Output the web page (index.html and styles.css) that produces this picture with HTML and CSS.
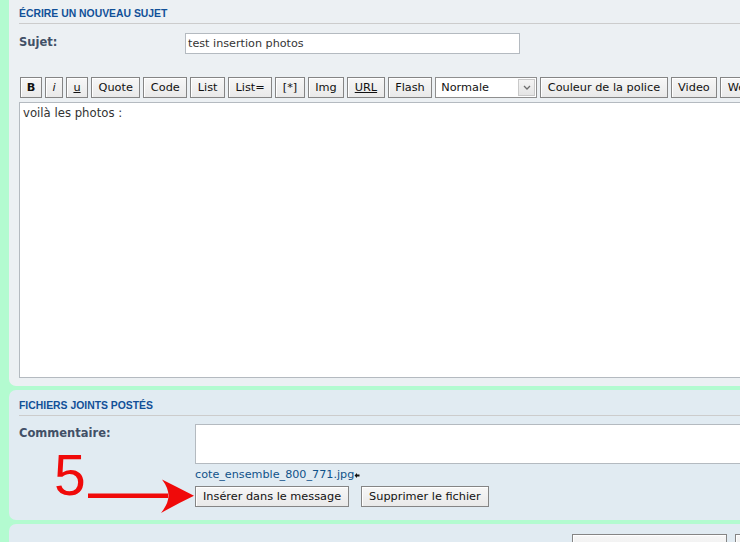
FILE: index.html
```html
<!DOCTYPE html>
<html lang="fr">
<head>
<meta charset="utf-8">
<title>Écrire un nouveau sujet</title>
<link rel="stylesheet" href="styles.css">
</head>
<body>
<div class="page">
  <div class="panel p1">
    <h3 class="ph">Écrire un nouveau sujet</h3>
    <div class="field">
      <span class="lbl">Sujet:</span>
      <div class="input subject">test insertion photos</div>
    </div>
    <div class="toolbar">
      <span class="btn bold">B</span>
      <span class="btn ital">i</span>
      <span class="btn und sq">u</span>
      <span class="btn">Quote</span>
      <span class="btn">Code</span>
      <span class="btn">List</span>
      <span class="btn">List=</span>
      <span class="btn">[*]</span>
      <span class="btn">Img</span>
      <span class="btn und">URL</span>
      <span class="btn">Flash</span>
      <span class="select">Normale<span class="sel-arrow"><svg width="8" height="5" viewBox="0 0 8 5"><path d="M1 1 L4 4 L7 1" fill="none" stroke="#6d6d6d" stroke-width="1.3"/></svg></span></span>
      <span class="btn">Couleur de la police</span>
      <span class="btn">Video</span>
      <span class="btn">Web</span>
    </div>
    <div class="editor">voilà les photos :</div>
  </div>

  <div class="panel p2">
    <h3 class="ph">Fichiers joints postés</h3>
    <div class="field att">
      <span class="lbl">Commentaire:</span>
      <div class="att-body">
        <div class="comment"></div>
        <div class="fname"><span class="flink">cote_ensemble_800_771.jpg</span><svg class="cursor" width="6" height="7" viewBox="0 0 6 7"><path d="M0.5 3.5 L3 1 L3 2.6 L5.5 2.6 L5.5 4.4 L3 4.4 L3 6 Z" fill="#111"/></svg></div>
        <div class="att-actions">
          <span class="btn">Insérer dans le message</span>
          <span class="btn">Supprimer le fichier</span>
        </div>
      </div>
    </div>
    <span class="five">5</span>
    <svg class="arrow" width="130" height="50" viewBox="0 0 130 50">
      <rect x="8" y="22.5" width="80" height="4.5" fill="#f00a0a"/>
      <path d="M114 24.8 Q97 16 82 8.5 Q88.5 17 88.5 24.8 Q88.5 32.5 81 42 Q97 33 114 24.8 Z" fill="#f00a0a"/>
    </svg>
  </div>

  <div class="panel p3">
    <div class="p3-actions">
      <span class="btn wide"></span>
      <span class="btn wide"></span>
    </div>
  </div>
</div>
</body>
</html>
```

FILE: styles.css
```css
html, body {
  margin: 0;
  padding: 0;
  background: #b3fbd0;
  overflow: hidden;
}
body {
  font-family: "DejaVu Sans", Verdana, sans-serif;
  font-size: 11px;
  color: #333;
}
.page {
  width: 900px;
  padding-left: 9px;
}
.panel {
  position: relative;
  background: #ecf0f3;
  border-radius: 7px;
  padding-left: 10px;
}
.p1 {
  border-radius: 0 0 7px 7px;
  padding-bottom: 8px;
}
.p2 {
  background: #e1ebf2;
  margin-top: 4px;
  padding-top: 9px;
  padding-bottom: 13px;
}
.p3 {
  background: #e1ebf2;
  margin-top: 4px;
  height: 40px;
  padding-top: 10px;
}
.ph {
  margin: 0;
  font: bold 10.4px/14px "Liberation Sans", Arial, sans-serif;
  color: #115098;
  text-transform: uppercase;
  padding: 7px 0 2px;
  border-bottom: 1px solid #cccccc;
}
.p2 .ph {
  padding-top: 0;
}
.field {
  display: grid;
  grid-template-columns: 166px 1fr;
  margin-top: 9px;
}
.lbl {
  font-weight: bold;
  font-size: 11.5px;
  line-height: 14px;
  color: #425067;
  padding-top: 2px;
}
.input {
  box-sizing: border-box;
  height: 21px;
  background: #fff;
  border: 1px solid #b4bac0;
  line-height: 19px;
  padding: 0 2px;
  font-size: 11.2px;
  color: #333;
}
.subject {
  width: 335px;
}
.toolbar {
  display: flex;
  gap: 3px;
  margin-top: 23px;
  margin-left: 1px;
  white-space: nowrap;
}
.btn {
  box-sizing: border-box;
  display: inline-flex;
  align-items: center;
  justify-content: center;
  height: 21px;
  padding: 0 6.5px;
  border: 1px solid #858585;
  background: linear-gradient(#f7f7f7, #e9e9e9);
  box-shadow: inset 1px 1px 0 #ffffff;
  color: #111;
  font-size: 11.3px;
  white-space: nowrap;
}
.bold { font-weight: bold; width: 22px; padding: 0; }
.ital { font-style: italic; width: 18px; padding: 0; }
.sq { width: 22px; padding: 0; }
.und { text-decoration: underline; }
.select {
  box-sizing: border-box;
  display: inline-flex;
  align-items: center;
  justify-content: space-between;
  width: 102px;
  height: 21px;
  border: 1px solid #8f8f8f;
  background: #fff;
  padding: 0 1px 0 5px;
  font-size: 11.3px;
  color: #111;
}
.sel-arrow {
  box-sizing: border-box;
  display: inline-flex;
  align-items: center;
  justify-content: center;
  width: 17px;
  height: 17px;
  border: 1px solid #c9c9c9;
  background: linear-gradient(#f4f4f4, #e4e4e4);
}
.editor {
  box-sizing: border-box;
  margin-top: 4px;
  height: 276px;
  background: #fff;
  border: 1px solid #b4bac0;
  padding: 3px 3px;
  line-height: 14px;
  font-size: 11.7px;
  color: #333;
}
.att {
  grid-template-columns: 176px 1fr;
  margin-top: 8px;
}
.comment {
  box-sizing: border-box;
  height: 40px;
  background: #fff;
  border: 1px solid #b4bac0;
}
.fname {
  margin-top: 4px;
  line-height: 14px;
  display: flex;
  align-items: center;
  font-size: 11.2px;
}
.flink {
  color: #105289;
}
.att-actions {
  display: flex;
  gap: 12px;
  margin-top: 4px;
}
.att-actions .btn {
  padding: 0 7px;
}
.five {
  position: absolute;
  left: 45px;
  top: 57px;
  font: 57px/1 "Liberation Sans", Arial, sans-serif;
  color: #f00a0a;
}
.arrow {
  position: absolute;
  left: 71px;
  top: 81px;
}
.p3-actions {
  display: flex;
  gap: 8px;
  padding-left: 553px;
}
.wide {
  width: 155px;
  height: 24px;
}
```
